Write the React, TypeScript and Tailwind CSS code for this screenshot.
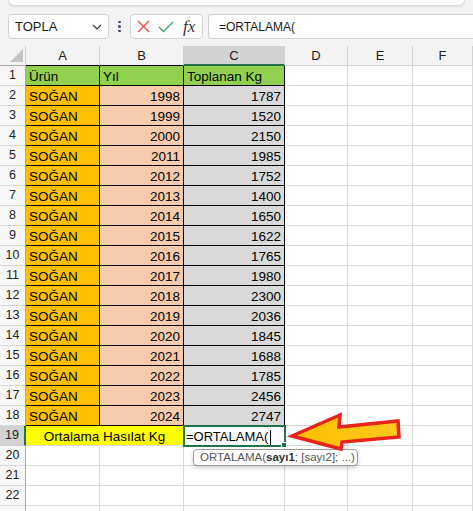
import React from "react";

const rows: [number, number][] = [
  [1998, 1787],
  [1999, 1520],
  [2000, 2150],
  [2011, 1985],
  [2012, 1752],
  [2013, 1400],
  [2014, 1650],
  [2015, 1622],
  [2016, 1765],
  [2017, 1980],
  [2018, 2300],
  [2019, 2036],
  [2020, 1845],
  [2021, 1688],
  [2022, 1785],
  [2023, 2456],
  [2024, 2747],
];

const font = { fontFamily: '"Liberation Sans", Arial, sans-serif' };

function RowHead({ n, selected }: { n?: number; selected?: boolean }) {
  return (
    <div
      className={
        "flex h-[20px] items-center justify-center border-b border-r text-[12.5px] leading-none text-[#222] " +
        (selected
          ? "border-b-[#d0d0d0] border-r-2 border-r-[#217346] bg-[#d2d2d2]"
          : "border-b-[#d6d6d6] border-r-[#a8a8a8] bg-[#f7f7f7]")
      }
    >
      {n}
    </div>
  );
}

function Cell({
  children,
  className = "",
  right,
}: {
  children?: React.ReactNode;
  className?: string;
  right?: boolean;
}) {
  return (
    <div
      className={
        "flex h-[20px] items-end overflow-hidden whitespace-nowrap border-b border-r border-black pb-[2px] text-[13.5px] leading-none text-black " +
        (right ? "justify-end pr-[3px] " : "pl-[3px] ") +
        className
      }
    >
      {children}
    </div>
  );
}

function Empty() {
  return <div className="h-[20px] border-b border-r border-[#d9d9d9] bg-white" />;
}

export default function App() {
  return (
    <div className="relative h-[511px] w-[473px] overflow-hidden bg-[#f3f3f3]" style={font}>
      {/* top white bar */}
      <div className="mx-2 h-[6px] rounded-b-[6px] border border-t-0 border-[#dcdcdc] bg-white shadow-[0_1px_2px_rgba(0,0,0,0.08)]" />

      {/* formula bar */}
      <div className="mt-[8px] flex h-[25px] items-stretch">
        <div className="ml-2 flex w-[101px] items-center justify-between rounded-[4px] border border-[#d1d1d1] bg-white pl-[6px] pr-[6px]">
          <span className="text-[13px] leading-none text-[#1a1a1a]">TOPLA</span>
          <svg width="10" height="6" viewBox="0 0 10 6">
            <path d="M1 1 L5 5 L9 1" fill="none" stroke="#333" strokeWidth="1.1" />
          </svg>
        </div>
        <div className="flex w-[21px] flex-col items-center justify-center gap-[2px]">
          <span className="h-[2.5px] w-[2.5px] rounded-full bg-[#4a3d6b]" />
          <span className="h-[2.5px] w-[2.5px] rounded-full bg-[#4a3d6b]" />
          <span className="h-[2.5px] w-[2.5px] rounded-full bg-[#4a3d6b]" />
        </div>
        <div className="flex w-[73px] items-center rounded-[4px] border border-[#d1d1d1] bg-white">
          <svg className="ml-[6px]" width="13" height="13" viewBox="0 0 13 13">
            <path d="M1 1 L12 12 M12 1 L1 12" stroke="#e5484d" strokeWidth="1.4" fill="none" />
          </svg>
          <svg className="ml-[8px]" width="16" height="12" viewBox="0 0 16 12">
            <path d="M1 6 L5.5 10.5 L15 1" stroke="#46a36a" strokeWidth="1.4" fill="none" />
          </svg>
          <span
            className="ml-[9px] text-[17px] italic leading-none text-[#333]"
            style={{ fontFamily: '"Liberation Serif", "Times New Roman", serif' }}
          >
            fx
          </span>
        </div>
        <div className="ml-[5px] flex flex-1 items-center rounded-l-[4px] border border-r-0 border-[#d1d1d1] bg-white pl-[10px]">
          <span className="text-[12px] leading-none text-[#1a1a1a]">=ORTALAMA(</span>
        </div>
      </div>

      {/* sheet */}
      <div className="mt-[7px] grid grid-cols-[26px_74px_84px_101px_63px_65px_1fr]">
        {/* header row */}
        <div className="relative h-[20px] border-b border-r border-b-[#a8a8a8] border-r-[#d0d0d0] bg-[#f3f3f3]">
          <svg className="absolute bottom-[3px] right-[2px]" width="13" height="13" viewBox="0 0 13 13">
            <path d="M13 0 L13 13 L0 13 Z" fill="#c4c4c4" />
          </svg>
        </div>
        {["A", "B"].map((c) => (
          <div
            key={c}
            className="flex h-[20px] items-center justify-center border-b border-r border-b-black border-r-[#d0d0d0] bg-[#f3f3f3] text-[13px] leading-none text-[#222]"
          >
            {c}
          </div>
        ))}
        <div className="flex h-[20px] items-center justify-center border-b-2 border-r border-b-[#217346] border-r-[#d0d0d0] bg-[#d3d3d3] text-[13px] leading-none text-[#222]">
          C
        </div>
        {["D", "E", "F"].map((c) => (
          <div
            key={c}
            className="flex h-[20px] items-center justify-center border-b border-r border-b-[#d0d0d0] border-r-[#d0d0d0] bg-[#f3f3f3] text-[13px] leading-none text-[#222]"
          >
            {c}
          </div>
        ))}

        {/* row 1 */}
        <RowHead n={1} />
        <Cell className="bg-[#92d050]">Ürün</Cell>
        <Cell className="bg-[#92d050]">Yıl</Cell>
        <Cell className="bg-[#92d050]">Toplanan Kg</Cell>
        <Empty />
        <Empty />
        <Empty />

        {rows.map(([y, kg], i) => (
          <React.Fragment key={y}>
            <RowHead n={i + 2} />
            <Cell className="bg-[#ffc000]">SOĞAN</Cell>
            <Cell right className="bg-[#f8cbad]">
              {y}
            </Cell>
            <Cell right className="bg-[#d9d9d9]">
              {kg}
            </Cell>
            <Empty />
            <Empty />
            <Empty />
          </React.Fragment>
        ))}

        {/* row 19 */}
        <RowHead n={19} selected />
        <div className="col-span-2 flex h-[20px] items-end justify-center border-b border-r border-b-[#d9d9d9] border-r-black bg-[#ffff00] pb-[2px] text-[13.5px] leading-none text-black">
          Ortalama Hasılat Kg
        </div>
        <div className="relative flex h-[20px] items-end border-b border-r border-[#d9d9d9] bg-white pb-[2px] pl-[2px] text-[13px] leading-none text-black">
          <span>=ORTALAMA(</span>
          <span className="mb-[-2px] ml-[2px] h-[15px] w-px bg-black" />
          <div className="absolute -left-[1px] -top-[1px] h-[22px] w-[103px] border-2 border-[#217346]" />
          <div className="absolute -bottom-[3px] -right-[3px] h-[6px] w-[6px] border border-white bg-[#217346]" />
        </div>
        <Empty />
        <Empty />
        <Empty />

        {[20, 21, 22].map((n) => (
          <React.Fragment key={n}>
            <RowHead n={n} />
            <Empty />
            <Empty />
            <Empty />
            <Empty />
            <Empty />
            <Empty />
          </React.Fragment>
        ))}
        <RowHead />
        <Empty />
        <Empty />
        <Empty />
        <Empty />
        <Empty />
        <Empty />
      </div>

      {/* tooltip */}
      <div className="absolute left-[193px] top-[449px] flex h-[17px] w-[165px] items-center whitespace-nowrap rounded-[4px] border border-[#9a9a9a] bg-white pl-[6px] text-[11.5px] leading-none text-[#555] shadow-[0_2px_4px_rgba(0,0,0,0.18)]">
        ORTALAMA(<b className="font-bold text-[#333]">sayı1</b>; [sayı2]; ...)
      </div>

      {/* arrow */}
      <svg className="pointer-events-none absolute left-0 top-0" width="473" height="511" viewBox="0 0 473 511">
        <defs>
          <linearGradient id="ag" x1="0" y1="0" x2="1" y2="0">
            <stop offset="0" stopColor="#ffc000" />
            <stop offset="1" stopColor="#ffc820" />
          </linearGradient>
        </defs>
        <polygon
          points="292,436 340,415 339,427 398,421 399,437 342,442 341,449"
          fill="url(#ag)"
          stroke="#e8231a"
          strokeWidth="3.5"
          strokeLinejoin="miter"
        />
      </svg>
    </div>
  );
}
